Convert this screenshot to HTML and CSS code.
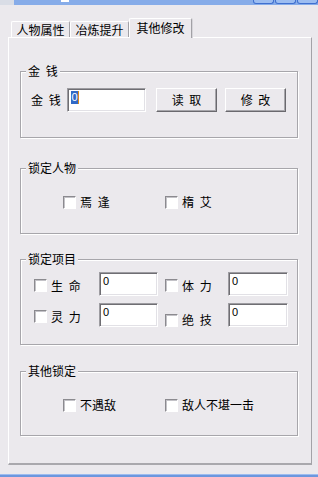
FILE: index.html
```html
<!DOCTYPE html>
<html lang="zh-CN">
  <head>
    <meta charset="UTF-8" />
    <meta name="viewport" content="width=device-width, initial-scale=1.0" />
    <title>其他修改</title>
    <link rel="stylesheet" href="styles.css">
  </head>

  <body>
    <div class="titlebar">
      <span class="tb-left"></span>
      <span class="tb-mark"></span>
      <span class="tb-fill"></span>
      <span class="tb-btn"></span>
      <span class="tb-btn"></span>
      <span class="tb-btn"></span>
    </div>

    <div class="window">
      <div class="tabs">
        <div class="tab">人物属性</div>
        <div class="tab">冶炼提升</div>
        <div class="tab active">其他修改</div>
      </div>

      <div class="panel">
        <!-- money -->
        <div class="group g-money">
          <div class="group-title">金 钱</div>
          <div class="money-row">
            <span class="label money-label">金 钱</span>
            <div class="field money-field"><span class="sel">0</span><span class="caret"></span></div>
            <div class="btn">读 取</div>
            <div class="btn btn-second">修 改</div>
          </div>
        </div>

        <!-- lock characters -->
        <div class="group g-people">
          <div class="group-title">锁定人物</div>
          <div class="check-row">
            <div class="check-item"><span class="box"></span><span class="label">焉 逢</span></div>
            <div class="check-item"><span class="box"></span><span class="label">楕 艾</span></div>
          </div>
        </div>

        <!-- lock items -->
        <div class="group g-items">
          <div class="group-title">锁定项目</div>
          <div class="item-row">
            <div class="cell c1"><span class="box"></span><span class="label">生 命</span></div>
            <div class="field f1">0</div>
            <div class="cell c2"><span class="box"></span><span class="label">体 力</span></div>
            <div class="field f2">0</div>
          </div>
          <div class="item-row second">
            <div class="cell c1"><span class="box"></span><span class="label">灵 力</span></div>
            <div class="field f1">0</div>
            <div class="cell c2 low"><span class="box"></span><span class="label">绝 技</span></div>
            <div class="field f2">0</div>
          </div>
        </div>

        <!-- other locks -->
        <div class="group g-other">
          <div class="group-title">其他锁定</div>
          <div class="check-row">
            <div class="check-item"><span class="box"></span><span class="label">不遇敌</span></div>
            <div class="check-item"><span class="box"></span><span class="label">敌人不堪一击</span></div>
          </div>
        </div>
      </div>
    </div>

    <div class="frame-bottom"></div>
  </body>
</html>
```

FILE: styles.css
```css
* {
  box-sizing: border-box;
}

body {
  margin: 0;
  height: 477px;
  overflow: hidden;
  background-color: #ebe9ed;
  color: #000;
  font-family: "Noto Sans CJK SC", "Liberation Sans", sans-serif;
  font-size: 12px;
  line-height: 14px;
}

/* remains of the title bar */
.titlebar {
  display: flex;
  height: 5px;
  background-color: #86ace9;
}

.tb-left {
  width: 14px;
  background-color: #d9dde6;
}

.tb-mark {
  width: 8px;
  height: 2px;
  margin-left: 47px;
  background-color: #fff;
}

.tb-fill {
  flex: 1;
}

.tb-btn {
  width: 21px;
  height: 4px;
  margin-left: 1px;
  background-color: #9cbdf1;
  border: 1px solid #3f6fcf;
  border-top: none;
  border-radius: 0 0 3px 3px;
}

.window {
  padding: 13px 0 0 8px;
}

/* tabs */
.tabs {
  display: flex;
  align-items: flex-end;
  height: 19px;
  padding-left: 3px;
}

.tab {
  width: 59px;
  height: 16px;
  border-top: 1px solid #fff;
  border-left: 1px solid #fff;
  border-right: 1px solid #a2a1a6;
  border-radius: 2px 2px 0 0;
  box-shadow: 1px 0 0 #d6d5da;
  text-align: center;
  line-height: 15px;
}

.tab.active {
  position: relative;
  z-index: 1;
  width: 63px;
  height: 20px;
  margin-bottom: -1px;
  background-color: #ebe9ed;
  line-height: 17px;
}

/* tab page */
.panel {
  width: 304px;
  height: 428px;
  padding: 33px 0 0 11px;
  border-top: 1px solid #fff;
  border-left: 1px solid #fff;
  border-right: 1px solid #a3a2a7;
  border-bottom: 2px solid #a9a8ad;
}

.group {
  width: 278px;
  border: 1px solid #a7a6ab;
  box-shadow: inset 1px 1px 0 #fff, 1px 1px 0 #fff;
}

.group-title {
  display: table;
  margin: -8px 0 0 5px;
  padding: 0 2px;
  background-color: #ebe9ed;
  word-spacing: 3px;
}

.g-money {
  height: 67px;
}

.g-people {
  height: 66px;
  margin-top: 30px;
}

.g-items {
  height: 86px;
  margin-top: 25px;
}

.g-other {
  height: 65px;
  margin-top: 26px;
}

.label {
  white-space: nowrap;
  word-spacing: 3px;
}

/* sunken edit boxes */
.field {
  height: 24px;
  padding: 2px 0 0 3px;
  background-color: #fff;
  border-top: 1px solid #9d9ca1;
  border-left: 1px solid #9d9ca1;
  border-right: 1px solid #fff;
  border-bottom: 1px solid #fff;
  box-shadow: inset 1px 1px 0 #6f6e73, inset -1px -1px 0 #e2e1e6;
  font-family: "Liberation Sans", sans-serif;
  font-size: 11px;
  line-height: 13px;
}

.sel {
  display: inline-block;
  width: 7px;
  height: 13px;
  background-color: #3169c6;
  color: #fff;
  text-align: center;
}

.caret {
  display: inline-block;
  width: 1px;
  height: 13px;
  vertical-align: top;
  background-color: #d98a1c;
}

/* raised buttons */
.btn {
  width: 61px;
  height: 24px;
  border-top: 1px solid #fff;
  border-left: 1px solid #fff;
  border-right: 1px solid #6a696e;
  border-bottom: 1px solid #6a696e;
  box-shadow: inset -1px -1px 0 #a7a6ab;
  text-align: center;
  line-height: 21px;
  word-spacing: 3px;
}

.money-row {
  display: flex;
  align-items: center;
  margin-top: 10px;
  padding-left: 10px;
}

.money-label {
  width: 36px;
}

.money-field {
  width: 79px;
  margin-right: 10px;
}

.btn-second {
  margin-left: 8px;
}

/* checkboxes */
.box {
  flex: none;
  width: 13px;
  height: 13px;
  margin-right: 4px;
  background-color: #fff;
  border-top: 1px solid #8b8a8f;
  border-left: 1px solid #8b8a8f;
  border-right: 1px solid #fff;
  border-bottom: 1px solid #fff;
  box-shadow: inset 1px 1px 0 #c3c2c7;
}

.check-row {
  display: flex;
  margin-top: 20px;
  padding-left: 42px;
}

.check-item {
  display: flex;
  align-items: center;
  width: 102px;
}

.item-row {
  display: flex;
  align-items: center;
  height: 24px;
  margin-top: 6px;
  padding-left: 13px;
}

.item-row.second {
  margin-top: 7px;
}

.cell {
  display: flex;
  align-items: center;
  padding-top: 3px;
}

.cell.c1 {
  width: 65px;
}

.cell.c2 {
  width: 63px;
  margin-left: 7px;
}

.cell.low {
  align-self: flex-end;
  padding-top: 0;
}

.field.f1 {
  width: 59px;
}

.field.f2 {
  width: 60px;
}

.frame-bottom {
  height: 3px;
  margin-top: 9px;
  background-color: #6c97de;
  border-top: 1px solid #9dbcef;
}
```
